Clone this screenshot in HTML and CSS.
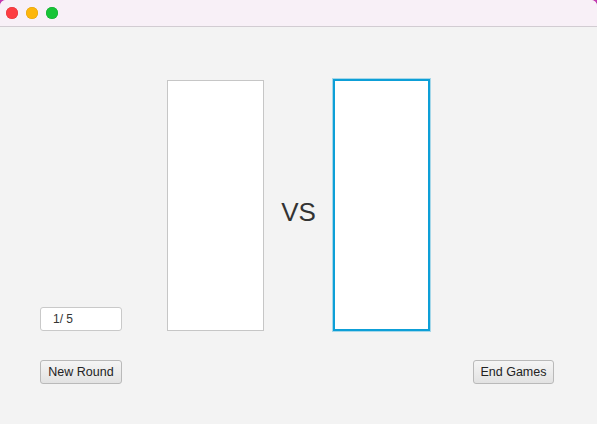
FILE: index.html
```html
<!DOCTYPE html>
<html>
<head>
<meta charset="utf-8">
<link rel="stylesheet" href="styles.css">
</head>
<body>
<div class="window">
  <div class="titlebar">
    <span class="light red"></span>
    <span class="light yellow"></span>
    <span class="light green"></span>
  </div>
  <div class="content">
    <div class="board">
      <div class="counter"><span class="cur">1</span>/ 5</div>
      <div class="card first"></div>
      <div class="vs">VS</div>
      <div class="card selected"></div>
      <button class="btn new">New Round</button>
      <button class="btn end">End Games</button>
    </div>
  </div>
</div>
</body>
</html>
```
FILE: styles.css
```css
html, body {
  margin: 0;
  padding: 0;
  width: 597px;
  height: 424px;
  overflow: hidden;
  background: #c23ab0;
}
.window {
  width: 597px;
  height: 424px;
  background: #f3f3f3;
  border-radius: 6px 6px 0 0;
  overflow: hidden;
  display: flex;
  flex-direction: column;
  font-family: "Liberation Sans", Arial, sans-serif;
}
.titlebar {
  height: 26px;
  background: #f8f0f7;
  border-bottom: 1px solid #d2ccd2;
  display: flex;
  align-items: center;
  gap: 8px;
  padding-left: 6px;
  flex-shrink: 0;
}
.light {
  width: 12px;
  height: 12px;
  border-radius: 50%;
  display: block;
}
.red { background: #fd3c42; box-shadow: inset 0 0 0 0.5px #e0353b; }
.yellow { background: #fdb60b; box-shadow: inset 0 0 0 0.5px #e0a10a; }
.green { background: #17c437; box-shadow: inset 0 0 0 0.5px #12a82e; }
.content {
  flex: 1;
  padding: 53px 0 0 40px;
}
.board {
  display: grid;
  grid-template-columns: 82px 141px 70px 97px 1fr;
  grid-template-rows: 251px 23px;
  row-gap: 29px;
}
.counter {
  grid-column: 1;
  grid-row: 1;
  align-self: end;
  box-sizing: border-box;
  height: 24px;
  background: #fff;
  border: 1px solid #c9c9c9;
  border-radius: 3px;
  font-size: 12px;
  color: #333;
  padding-left: 12px;
  line-height: 22px;
}
.card {
  grid-row: 1;
  background: #fff;
  box-sizing: border-box;
}
.card.first {
  grid-column: 2;
  margin-left: 45px;
  width: 97px;
  border: 1px solid #c6c6c6;
}
.card.selected {
  grid-column: 4;
  width: 97px;
  margin-top: -1px;
  border: 2px solid #0d9fd7;
  box-shadow: 0 0 0 1px rgba(20, 162, 216, 0.35);
}
.vs {
  grid-column: 3;
  grid-row: 1;
  align-self: center;
  text-align: center;
  font-size: 26px;
  color: #333;
  padding-top: 14px;
  padding-left: 1px;
}
.btn {
  grid-row: 2;
  height: 24px;
  box-sizing: border-box;
  border: 1px solid #b9b9b9;
  border-radius: 3px;
  background: linear-gradient(#f5f5f5, #e2e2e2);
  font-family: "Liberation Sans", Arial, sans-serif;
  font-size: 12.5px;
  color: #222;
  padding: 0;
}
.btn.new {
  grid-column: 1;
  width: 82px;
}
.btn.end {
  grid-column: 5;
  justify-self: start;
  width: 81px;
  margin-left: 43px;
}
```
